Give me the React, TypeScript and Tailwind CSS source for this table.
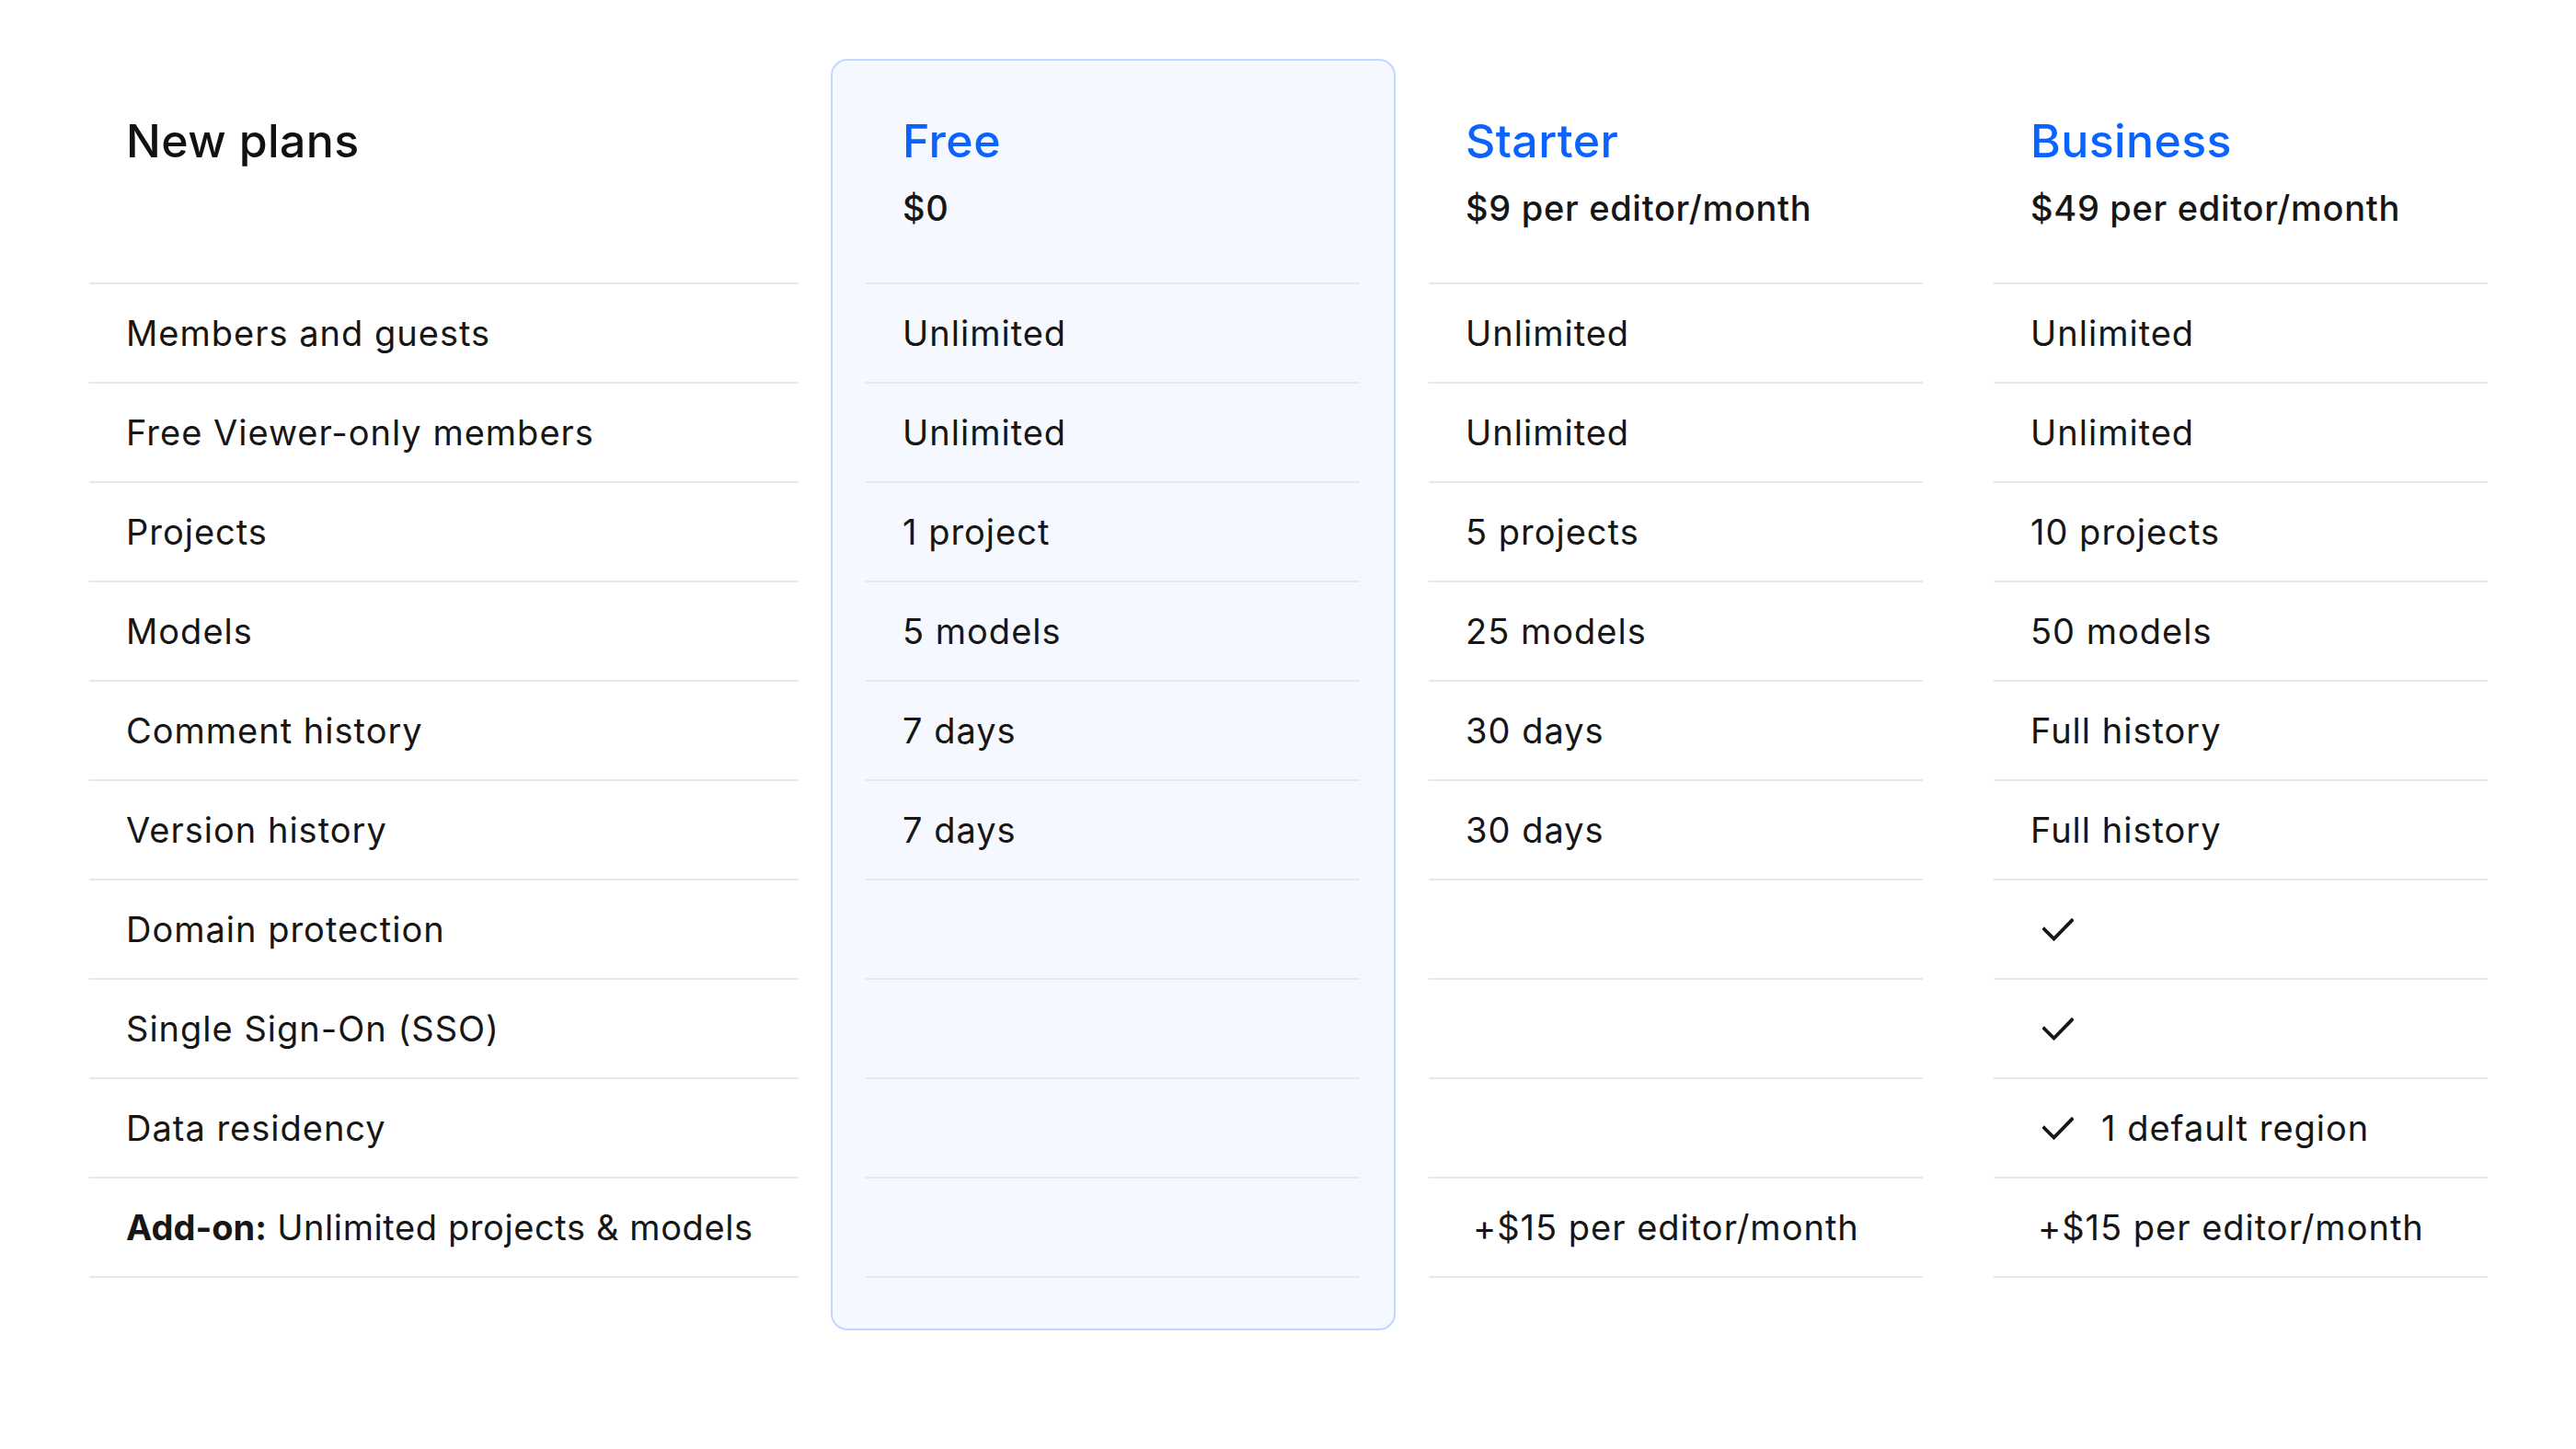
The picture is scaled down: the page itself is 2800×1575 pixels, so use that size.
import React from 'react';

type Cell = string | { check: true; text?: string };

interface Plan {
  name: string;
  price: string;
  cells: Cell[];
  highlight?: boolean;
}

const features: React.ReactNode[] = [
  'Members and guests',
  'Free Viewer-only members',
  'Projects',
  'Models',
  'Comment history',
  'Version history',
  'Domain protection',
  'Single Sign-On (SSO)',
  'Data residency',
  <span className="whitespace-nowrap tracking-[0.6px]">
    <span className="font-bold tracking-normal">Add-on:</span> Unlimited projects &amp; models
  </span>,
];

const plans: Plan[] = [
  {
    name: 'Free',
    price: '$0',
    highlight: true,
    cells: ['Unlimited', 'Unlimited', '1 project', '5 models', '7 days', '7 days', '', '', '', ''],
  },
  {
    name: 'Starter',
    price: '$9 per editor/month',
    cells: ['Unlimited', 'Unlimited', '5 projects', '25 models', '30 days', '30 days', '', '', '', '+$15 per editor/month'],
  },
  {
    name: 'Business',
    price: '$49 per editor/month',
    cells: [
      'Unlimited',
      'Unlimited',
      '10 projects',
      '50 models',
      'Full history',
      'Full history',
      { check: true },
      { check: true },
      { check: true, text: '1 default region' },
      '+$15 per editor/month',
    ],
  },
];

const Check = () => (
  <svg width="34" height="25" viewBox="0 0 34 25" fill="none" className="ml-[13px] shrink-0">
    <path d="M2 12 L12.5 22.5 L32 2.5" stroke="#161616" strokeWidth="3.8" strokeLinecap="square" />
  </svg>
);

const Row: React.FC<{ children?: React.ReactNode; last?: boolean }> = ({ children, last }) => (
  <div className="h-[108px] border-t-2 border-[#e3e8f1] flex items-center px-10 whitespace-nowrap">
    <div className={`flex items-center ${last ? 'pl-[8px]' : ''}`}>{children}</div>
  </div>
);

const Header: React.FC<{ title: string; price?: string; blue?: boolean; inCard?: boolean }> = ({
  title,
  price,
  blue,
  inCard,
}) => (
  <div className={`${inCard ? 'h-[241px] pt-[62px]' : 'h-[243px] pt-[64px]'} px-10`}>
    <div className={`text-[50px] leading-none font-medium tracking-[0.4px] ${blue ? 'text-[#0a62ff]' : 'text-[#111]'}`}>
      {title}
    </div>
    {price && (
      <div className="mt-[29px] text-[38px] leading-none font-medium tracking-[0.7px] text-[#161616]">{price}</div>
    )}
  </div>
);

const PlanColumn: React.FC<{ plan: Plan; inCard?: boolean }> = ({ plan, inCard }) => (
  <div className="w-[537px]">
    <Header title={plan.name} price={plan.price} blue inCard={inCard} />
    {plan.cells.map((c, i) => (
      <Row key={i} last={i === plan.cells.length - 1}>
        {typeof c === 'string' ? (
          c
        ) : (
          <>
            <Check />
            {c.text && <span className="ml-[30px]">{c.text}</span>}
          </>
        )}
      </Row>
    ))}
    <div className="border-t-2 border-[#e3e8f1]" />
  </div>
);

export default function App() {
  return (
    <div
      className="w-[2800px] h-[1575px] bg-white text-[38px] tracking-[1px] text-[#161616] pl-[97px] pt-[64px] flex items-start"
      style={{ fontFamily: 'Inter, "Noto Sans", sans-serif' }}
    >
      <div className="w-[771px]">
        <Header title="New plans" />
        {features.map((f, i) => (
          <Row key={i}>{f}</Row>
        ))}
        <div className="border-t-2 border-[#e3e8f1]" />
      </div>

      <div className="ml-[35px] w-[614px] px-[36px] pb-[55px] bg-[#f5f8ff] border-2 border-[#c2d7ff] rounded-[18px]">
        <PlanColumn plan={plans[0]} inCard />
      </div>

      <div className="ml-[36px]">
        <PlanColumn plan={plans[1]} />
      </div>

      <div className="ml-[77px]">
        <PlanColumn plan={plans[2]} />
      </div>
    </div>
  );
}
